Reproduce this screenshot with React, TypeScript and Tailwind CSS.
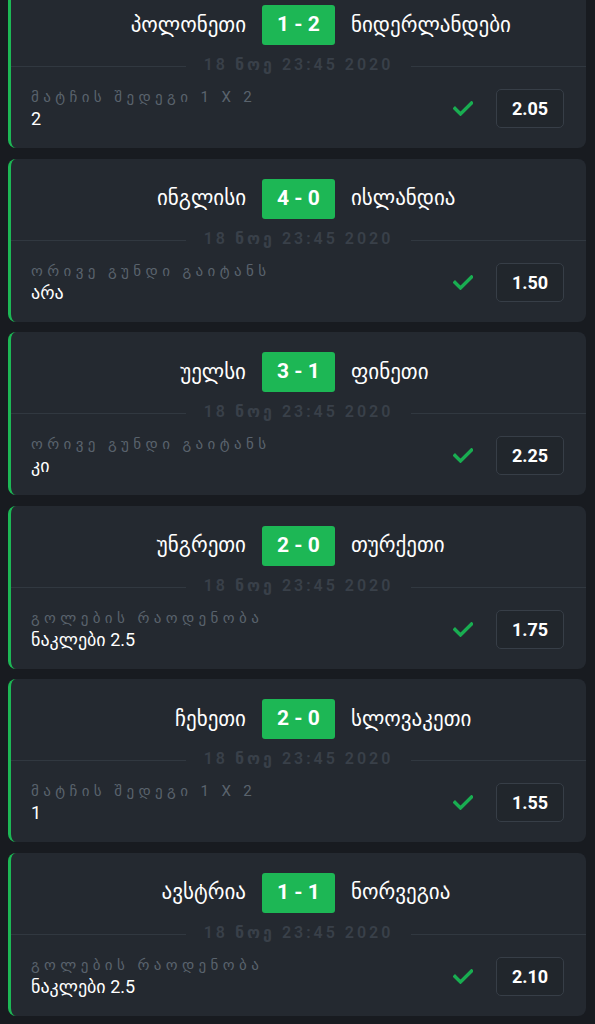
import React from "react";

interface Bet {
  home: string;
  away: string;
  score: string;
  market: string;
  pick: string;
  odds: string;
}

const bets: Bet[] = [
  { home: "პოლონეთი", away: "ნიდერლანდები", score: "1 - 2", market: "მატჩის შედეგი 1 X 2", pick: "2", odds: "2.05" },
  { home: "ინგლისი", away: "ისლანდია", score: "4 - 0", market: "ორივე გუნდი გაიტანს", pick: "არა", odds: "1.50" },
  { home: "უელსი", away: "ფინეთი", score: "3 - 1", market: "ორივე გუნდი გაიტანს", pick: "კი", odds: "2.25" },
  { home: "უნგრეთი", away: "თურქეთი", score: "2 - 0", market: "გოლების რაოდენობა", pick: "ნაკლები 2.5", odds: "1.75" },
  { home: "ჩეხეთი", away: "სლოვაკეთი", score: "2 - 0", market: "მატჩის შედეგი 1 X 2", pick: "1", odds: "1.55" },
  { home: "ავსტრია", away: "ნორვეგია", score: "1 - 1", market: "გოლების რაოდენობა", pick: "ნაკლები 2.5", odds: "2.10" },
];

const Check = () => (
  <svg width="20" height="15" viewBox="0 0 20 15" fill="none">
    <path d="M2 7.5 L7.5 13 L18.5 2" stroke="#19ad51" strokeWidth="3.4" strokeLinecap="square" />
  </svg>
);

const BetCard: React.FC<{ bet: Bet }> = ({ bet }) => (
  <div className="h-[163px] shrink-0 rounded-lg bg-[#242930] border-l-[3px] border-[#1db755] pt-5 flex flex-col">
    {/* Teams + score */}
    <div className="grid grid-cols-[1fr_auto_1fr] items-center gap-4 h-10">
      <span className="text-right text-[21px] text-white leading-none">{bet.home}</span>
      <div className="h-10 w-[73px] rounded-[3px] bg-[#1db755] flex items-center justify-center text-[21px] font-bold text-white">
        {bet.score}
      </div>
      <span className="text-left text-[21px] text-white leading-none">{bet.away}</span>
    </div>

    {/* Date */}
    <div className="mt-[10px] h-[20px] flex items-center">
      <div className="flex-1 h-px bg-[#313840] mt-[3px]" />
      <span className="mx-[18px] text-[16px] font-semibold tracking-[3px] text-[#394049] leading-none">
        18 ნოე 23:45 2020
      </span>
      <div className="flex-1 h-px bg-[#313840] mt-[3px]" />
    </div>

    {/* Market + odds */}
    <div className="mt-[5px] h-[57px] flex items-center pl-5 pr-[22px]">
      <div className="flex-1 flex flex-col">
        <span className="text-[15px] leading-[20px] tracking-[4.4px] text-[#5a636d]">{bet.market}</span>
        <span className="text-[18px] leading-[23px] text-white">{bet.pick}</span>
      </div>
      <Check />
      <div className="ml-[23px] h-[39px] w-[68px] rounded-[5px] border border-[#373e47] bg-[#21262c] flex items-center justify-center text-[18px] font-bold text-white">
        {bet.odds}
      </div>
    </div>
  </div>
);

export default function App() {
  return (
    <div
      className="w-[595px] h-[1024px] overflow-hidden bg-[#181b20]"
      style={{ fontFamily: "Roboto, 'Noto Sans', 'DejaVu Sans', sans-serif" }}
    >
      <div className="-mt-[15px] pl-2 pr-[9px] flex flex-col gap-[10.5px]">
        {bets.map((b) => (
          <BetCard key={b.home} bet={b} />
        ))}
      </div>
    </div>
  );
}
